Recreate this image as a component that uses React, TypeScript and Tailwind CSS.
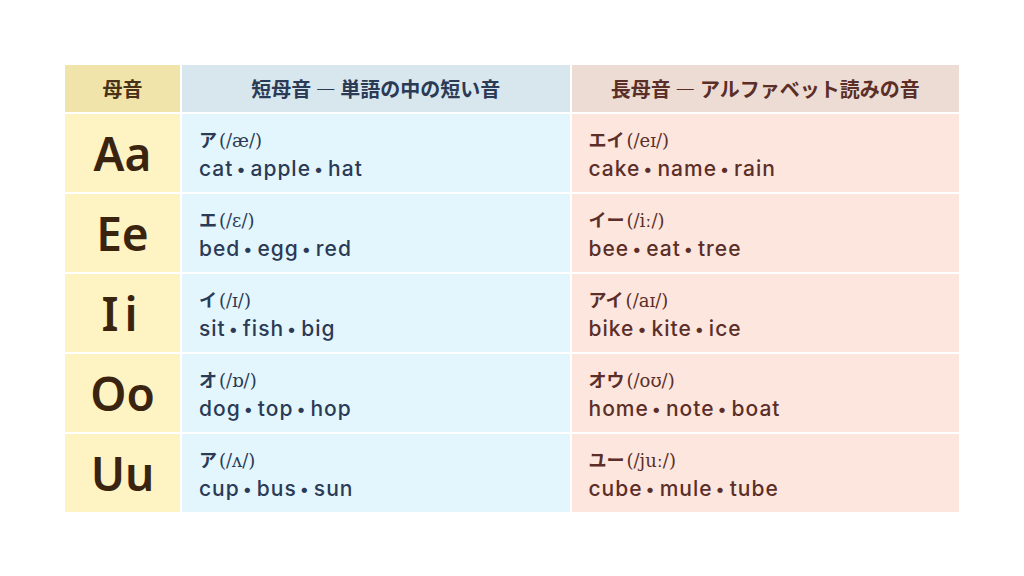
const rows = [
  { letter: 'Aa', sKana: 'ア', sIpa: '/æ/', sWords: ['cat', 'apple', 'hat'], lKana: 'エイ', lIpa: '/eɪ/', lWords: ['cake', 'name', 'rain'] },
  { letter: 'Ee', sKana: 'エ', sIpa: '/ɛ/', sWords: ['bed', 'egg', 'red'], lKana: 'イー', lIpa: '/iː/', lWords: ['bee', 'eat', 'tree'] },
  { letter: 'Ii', sKana: 'イ', sIpa: '/ɪ/', sWords: ['sit', 'fish', 'big'], lKana: 'アイ', lIpa: '/aɪ/', lWords: ['bike', 'kite', 'ice'] },
  { letter: 'Oo', sKana: 'オ', sIpa: '/ɒ/', sWords: ['dog', 'top', 'hop'], lKana: 'オウ', lIpa: '/oʊ/', lWords: ['home', 'note', 'boat'] },
  { letter: 'Uu', sKana: 'ア', sIpa: '/ʌ/', sWords: ['cup', 'bus', 'sun'], lKana: 'ユー', lIpa: '/juː/', lWords: ['cube', 'mule', 'tube'] },
];

const jp = { fontFamily: '"Noto Sans CJK JP", "Noto Sans", sans-serif' };
const latin = { fontFamily: 'Inter, "Noto Sans CJK JP", sans-serif' };
const serif = { fontFamily: '"DejaVu Serif", "Liberation Serif", serif' };

function Cell({ kana, ipa, words }: { kana: string; ipa: string; words: string[] }) {
  return (
    <div className="flex flex-1 flex-col justify-center pl-[17px] pt-[4px]">
      <div className="flex items-baseline text-[18px] leading-[26px]">
        <span className="font-bold" style={jp}>{kana}</span>
        <span className="ml-[2px] text-[18px]" style={serif}>({ipa})</span>
      </div>
      <div className="flex items-center text-[21px] font-medium leading-[30px] tracking-[1px]" style={latin}>
        {words.map((w, i) => (
          <span key={w} className="flex items-center">
            {i > 0 && <span className="ml-[3px] mr-[5px] text-[17px] tracking-normal">•</span>}
            {w}
          </span>
        ))}
      </div>
    </div>
  );
}

export default function App() {
  return (
    <div className="flex h-[576px] w-[1024px] bg-white pl-[65px] pt-[65px]" style={jp}>
      <div className="grid h-[447px] w-[894px] grid-cols-[115px_1fr_1fr] grid-rows-[47px_repeat(5,78px)] gap-[2px] bg-white">
        <div className="flex items-center justify-center bg-[#f1e4aa] text-[20px] font-bold text-[#4a3216]">母音</div>
        <div className="flex items-center justify-center bg-[#d8e7ee] text-[20px] font-bold text-[#2b3a55]">短母音 ― 単語の中の短い音</div>
        <div className="flex items-center justify-center bg-[#ecdcd3] text-[20px] font-bold text-[#5b2f28]">長母音 ― アルファベット読みの音</div>
        {rows.map((r) => [
          <div key={r.letter + 'a'} className={`flex items-center justify-center bg-[#fdf3c3] text-[46px] font-semibold text-[#3a230f] ${r.letter === 'Ii' ? 'tracking-[6px]' : ''}`} style={{ fontFamily: '"Noto Sans", sans-serif' }}>
            {r.letter}
          </div>,
          <div key={r.letter + 'b'} className="flex bg-[#e3f6fd] text-[#2b3a55]">
            <Cell kana={r.sKana} ipa={r.sIpa} words={r.sWords} />
          </div>,
          <div key={r.letter + 'c'} className="flex bg-[#fde6de] text-[#5b2f28]">
            <Cell kana={r.lKana} ipa={r.lIpa} words={r.lWords} />
          </div>,
        ])}
      </div>
    </div>
  );
}
